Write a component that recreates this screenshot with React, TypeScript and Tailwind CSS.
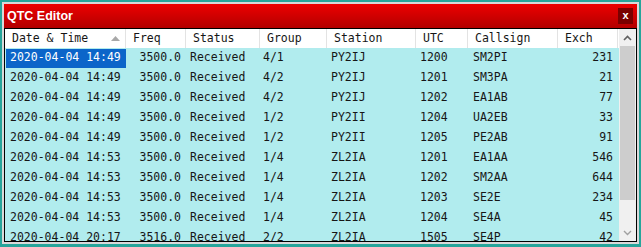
import React from "react";

interface QtcRow {
  date: string;
  freq: string;
  status: string;
  group: string;
  station: string;
  utc: string;
  callsign: string;
  exch: string;
}

const rows: QtcRow[] = [
  { date: "2020-04-04 14:49", freq: "3500.0", status: "Received", group: "4/1", station: "PY2IJ", utc: "1200", callsign: "SM2PI", exch: "231" },
  { date: "2020-04-04 14:49", freq: "3500.0", status: "Received", group: "4/2", station: "PY2IJ", utc: "1201", callsign: "SM3PA", exch: "21" },
  { date: "2020-04-04 14:49", freq: "3500.0", status: "Received", group: "4/2", station: "PY2IJ", utc: "1202", callsign: "EA1AB", exch: "77" },
  { date: "2020-04-04 14:49", freq: "3500.0", status: "Received", group: "1/2", station: "PY2II", utc: "1204", callsign: "UA2EB", exch: "33" },
  { date: "2020-04-04 14:49", freq: "3500.0", status: "Received", group: "1/2", station: "PY2II", utc: "1205", callsign: "PE2AB", exch: "91" },
  { date: "2020-04-04 14:53", freq: "3500.0", status: "Received", group: "1/4", station: "ZL2IA", utc: "1201", callsign: "EA1AA", exch: "546" },
  { date: "2020-04-04 14:53", freq: "3500.0", status: "Received", group: "1/4", station: "ZL2IA", utc: "1202", callsign: "SM2AA", exch: "644" },
  { date: "2020-04-04 14:53", freq: "3500.0", status: "Received", group: "1/4", station: "ZL2IA", utc: "1203", callsign: "SE2E", exch: "234" },
  { date: "2020-04-04 14:53", freq: "3500.0", status: "Received", group: "1/4", station: "ZL2IA", utc: "1204", callsign: "SE4A", exch: "45" },
  { date: "2020-04-04 20:17", freq: "3516.0", status: "Received", group: "2/2", station: "ZL2IA", utc: "1505", callsign: "SE4P", exch: "42" },
];

const headers = ["Date & Time", "Freq", "Status", "Group", "Station", "UTC", "Callsign", "Exch"];

const cols = "grid grid-cols-[121px_60px_74px_67px_89px_52px_90px_60px]";

export default function App() {
  return (
    <div className="w-[641px] h-[247px] bg-[#27a59b] pt-[2px] pl-[2px] pr-[2px] pb-[3px] font-['DejaVu_Sans_Mono',monospace]">
      <div className="h-full flex flex-col border-2 border-[#d9d9d9] bg-[#ececec]">
        {/* Title bar */}
        <div className="h-[24px] shrink-0 flex items-center justify-between bg-gradient-to-b from-[#ee0000] to-[#b30000] pl-[3px] pr-[4px]">
          <span className="text-white font-bold text-[12.5px] font-['Liberation_Sans',Arial,sans-serif]">
            QTC Editor
          </span>
          <div className="w-[15px] h-[16px] bg-[#7a0000] flex items-center justify-center text-white font-bold text-[11px] leading-none font-['Liberation_Sans',Arial,sans-serif] pb-[1px]">
            x
          </div>
        </div>

        {/* Table */}
        <div className="flex-1 min-h-0 flex border border-black bg-[#b1ecee] overflow-hidden">
          <div className="flex-1 min-w-0 flex flex-col text-[11.5px] text-[#161616]">
            <div className={`${cols} h-[19px] shrink-0 bg-white`}>
              {headers.map((h, i) => (
                <div
                  key={h}
                  className="relative flex items-center pl-[7px] border-r border-[#e3e3e3]"
                >
                  {h}
                  {i === 0 && (
                    <svg className="absolute right-[5px] top-[7px]" width="9" height="5" viewBox="0 0 9 5">
                      <polygon points="4.5,0 9,5 0,5" fill="#a8a8a8" />
                    </svg>
                  )}
                </div>
              ))}
            </div>
            {rows.map((r, idx) => (
              <div key={idx} className={`${cols} h-[20px] shrink-0 whitespace-nowrap`}>
                <div className="flex items-center pl-[1px] h-full">
                  <div
                    className={`h-[19px] w-full flex items-center pl-[4px] ${
                      idx === 0 ? "bg-[#0c65c9] text-white" : ""
                    }`}
                  >
                    {r.date}
                  </div>
                </div>
                <div className="flex items-center justify-end pr-[5px]">{r.freq}</div>
                <div className="flex items-center pl-[4px]">{r.status}</div>
                <div className="flex items-center pl-[3px]">{r.group}</div>
                <div className="flex items-center pl-[4px]">{r.station}</div>
                <div className="flex items-center pl-[4px]">{r.utc}</div>
                <div className="flex items-center pl-[5px]">{r.callsign}</div>
                <div className="flex items-center justify-end pr-[5px]">{r.exch}</div>
              </div>
            ))}
          </div>

          {/* Scrollbar */}
          <div className="w-[17px] shrink-0 flex flex-col bg-[#f0f0f0]">
            <div className="h-[17px] flex items-center justify-center">
              <svg width="9" height="6" viewBox="0 0 9 6">
                <polyline points="1,5 4.5,1.5 8,5" fill="none" stroke="#606060" strokeWidth="1.6" />
              </svg>
            </div>
            <div className="h-[154px] mx-[1px] bg-[#cdcdcd]" />
            <div className="flex-1" />
            <div className="h-[17px] flex items-center justify-center">
              <svg width="9" height="6" viewBox="0 0 9 6">
                <polyline points="1,1 4.5,4.5 8,1" fill="none" stroke="#a0a0a0" strokeWidth="1.4" />
              </svg>
            </div>
          </div>
        </div>
      </div>
    </div>
  );
}
